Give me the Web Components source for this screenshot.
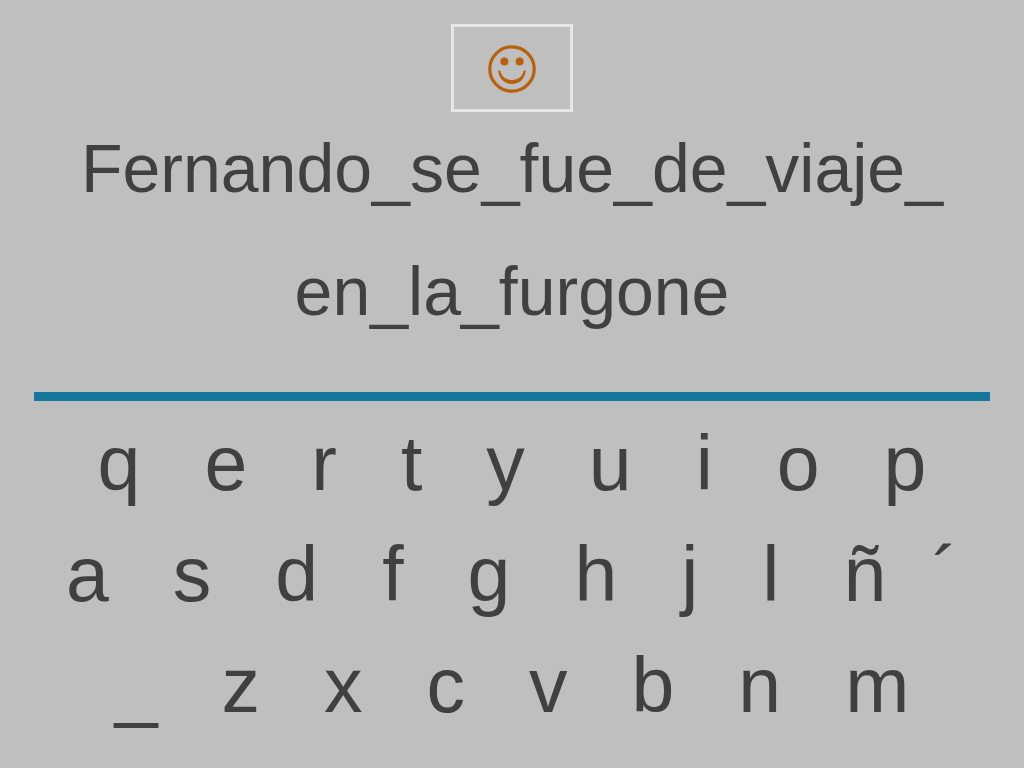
<!DOCTYPE html>
<html lang="es">
<head>
<meta charset="utf-8">
<meta name="viewport" content="width=device-width, initial-scale=1">
<title>Teclado</title>
<style>
  body {
    margin: 0;
    background: #bfbfbf;
    color: #404040;
    font-family: "Liberation Sans", Arial, sans-serif;
  }
</style>
</head>
<body>
<uc-board>
  <uc-face slot="face"></uc-face>
  <uc-phrase slot="phrase">
    <span>Fernando_se_fue_de_viaje_</span>
    <span>en_la_furgone</span>
  </uc-phrase>
  <uc-keyrow keys="qertyuiop"></uc-keyrow>
  <uc-keyrow keys="asdfghjlñ´"></uc-keyrow>
  <uc-keyrow keys="_zxcvbnm"></uc-keyrow>
</uc-board>

<script>
class Board extends HTMLElement {
  constructor() {
    super();
    this.attachShadow({ mode: "open" });
    this.shadowRoot.innerHTML = `
            <style>
                :host {
                    display: block;
                    padding: 24px 34px;
                }
                header {
                    display: flex;
                    justify-content: center;
                    margin-bottom: 17px;
                }
                hr {
                    height: 9px;
                    margin: 62px 0 7px;
                    border: 0;
                    background: #14779b;
                }
            </style>
            <header>
                <slot name="face"></slot>
            </header>
            <slot name="phrase"></slot>
            <hr>
            <section id="keys">
                <slot></slot>
            </section>
        `;
    this.addEventListener("key", this._type.bind(this));
  }

  _type(event) {
    const lines = this.querySelectorAll("uc-phrase span");
    lines[lines.length - 1].textContent += event.detail;
  }
}

class Face extends HTMLElement {
  constructor() {
    super();
    this.attachShadow({ mode: "open" });
    this.shadowRoot.innerHTML = `
            <style>
                :host {
                    display: block;
                }
                button {
                    display: block;
                    padding: 18px 34px 16px;
                    border: 3px solid #e6e6e6;
                    background: none;
                    color: #b9600b;
                    cursor: pointer;
                }
                svg {
                    display: block;
                }
            </style>
            <button type="button" aria-label="☺">
                <svg width="48" height="48" viewBox="0 0 48 48" fill="currentColor">
                    <circle cx="24" cy="24" r="22.2" fill="none" stroke="currentColor" stroke-width="3.2"/>
                    <circle cx="16.4" cy="16.4" r="4"/>
                    <circle cx="31.6" cy="16.4" r="4"/>
                    <path d="M10.2 25.8C11.2 34.2 16.5 39 24 39S36.8 34.2 37.8 25.8Q36.8 24.8 35.8 25.6C34.4 31.8 30.2 35 24 35S13.6 31.8 12.2 25.6Q11.2 24.8 10.2 25.8Z"/>
                </svg>
            </button>
        `;
  }
}

class Phrase extends HTMLElement {
  constructor() {
    super();
    this.attachShadow({ mode: "open" });
    this.shadowRoot.innerHTML = `
            <style>
                :host {
                    display: flex;
                    flex-direction: column;
                    align-items: center;
                    gap: 45px;
                    font-size: 68px;
                    line-height: 78px;
                }
            </style>
            <slot></slot>
        `;
  }
}

class KeyRow extends HTMLElement {
  constructor() {
    super();
    this.attachShadow({ mode: "open" });
    this.shadowRoot.innerHTML = `
            <style>
                :host {
                    display: flex;
                    justify-content: center;
                    font-size: 77px;
                    line-height: 111px;
                }
                button {
                    padding: 0;
                    border: 0;
                    background: none;
                    color: inherit;
                    font: inherit;
                    cursor: pointer;
                }
                button + button {
                    margin-left: 64px;
                }
                /* the accent sits closer to the letter before it */
                button + .accent {
                    margin-left: 46px;
                }
            </style>
        `;
  }

  connectedCallback() {
    for (const key of this.getAttribute("keys")) {
      const button = document.createElement("button");
      button.type = "button";
      button.textContent = key;
      if (key === "´") {
        button.className = "accent";
      }
      button.addEventListener("click", this._press.bind(this, key));
      this.shadowRoot.appendChild(button);
    }
  }

  _press(key) {
    this.dispatchEvent(new CustomEvent("key", { detail: key, bubbles: true, composed: true }));
  }
}

customElements.define("uc-board", Board);
customElements.define("uc-face", Face);
customElements.define("uc-phrase", Phrase);
customElements.define("uc-keyrow", KeyRow);
</script>
</body>
</html>
